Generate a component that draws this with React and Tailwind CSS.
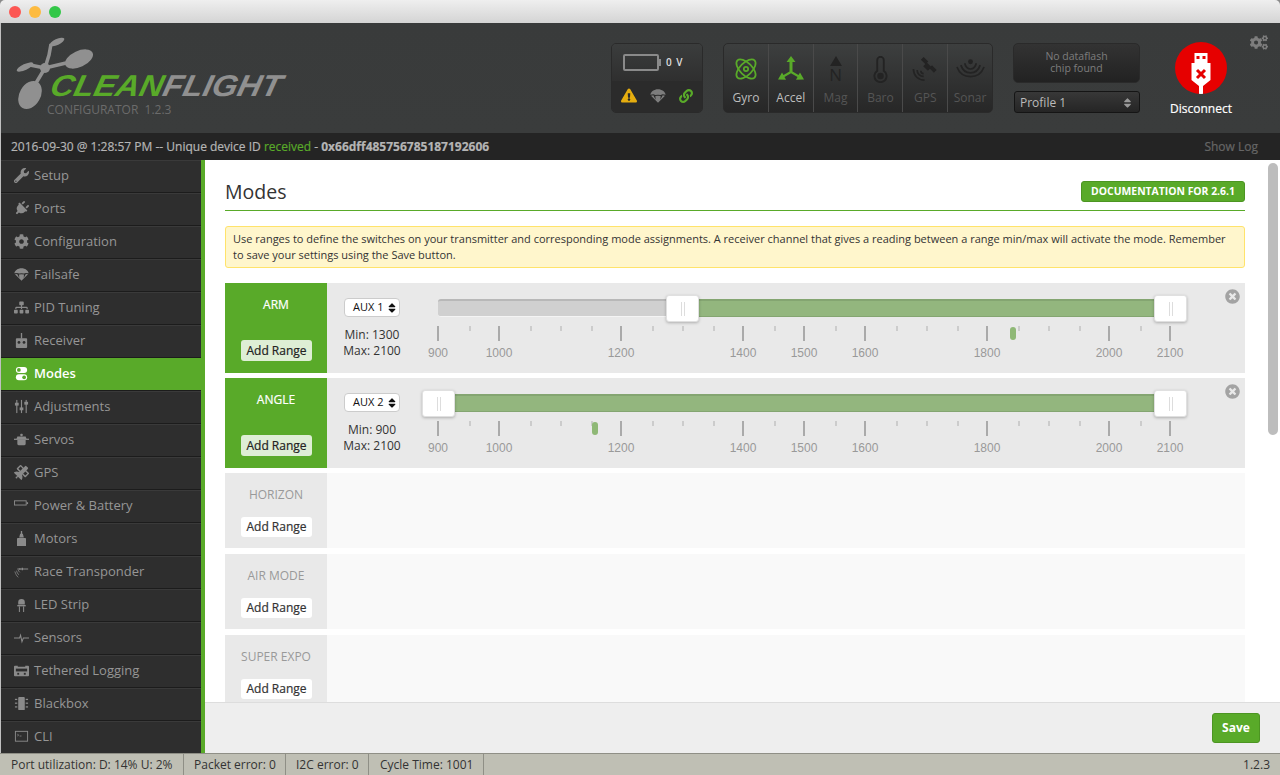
import {
  FaWrench,
  FaPlug,
  FaCog,
  FaCogs,
  FaSitemap,
  FaSatellite,
  FaExclamationTriangle,
  FaLink,
  FaTimesCircle,
  FaSortUp,
  FaSortDown,
} from 'react-icons/fa';

const xAt = (v) => ((v - 900) / 1200) * 732;

const Parachute = ({ className }) => (
  <svg viewBox="0 0 24 20" className={className} fill="currentColor">
    <path d="M12 0C6 0 1.500 3.500 0.500 8L5 7.500L8 8.500L12 8L16 8.500L19 7.500L23.500 8C22.500 3.500 18 0 12 0Z" />
    <path d="M1.500 9.500L10.500 18.500L12 20L13.500 18.500L22.500 9.500L19 9L15.500 15.500L16 10L12 9.500L8 10L8.500 15.500L5 9Z" />
  </svg>
);

const Plug = ({ className }) => <FaPlug className={`${className} rotate-45`} />;

const Radio = ({ className }) => (
  <svg viewBox="0 0 16 16" className={className} fill="currentColor">
    <rect x="7.300" y="0" width="1.400" height="6" />
    <path d="M2 6.500a1 1 0 011-1h10a1 1 0 011 1V15a1 1 0 01-1 1H3a1 1 0 01-1-1Z" />
    <circle cx="5.300" cy="10" r="1.500" fill="#2e2e2e" />
    <circle cx="10.700" cy="10" r="1.500" fill="#2e2e2e" />
  </svg>
);

const Toggles = ({ className }) => (
  <svg viewBox="0 0 16 16" className={className}>
    <rect x="2" y="1" width="12" height="6.500" rx="3.200" fill="#fff" />
    <circle cx="5.200" cy="4.200" r="2" fill="#59aa29" />
    <rect x="2" y="8.800" width="12" height="6.500" rx="3.200" fill="#fff" />
    <circle cx="10.800" cy="12" r="2" fill="#59aa29" />
  </svg>
);

const SlidersV = ({ className }) => (
  <svg viewBox="0 0 16 16" className={className} fill="currentColor">
    <rect x="2.400" y="1" width="1.200" height="14" />
    <rect x="7.400" y="1" width="1.200" height="14" />
    <rect x="12.400" y="1" width="1.200" height="14" />
    <rect x="1" y="4" width="4" height="3" />
    <rect x="6" y="9" width="4" height="3" />
    <rect x="11" y="3" width="4" height="3" />
  </svg>
);

const Pot = ({ className }) => (
  <svg viewBox="0 0 18 16" className={className} fill="currentColor">
    <rect x="7.500" y="1" width="3" height="3" rx="1" />
    <path d="M4 4.500h10l1 3H3Z" />
    <rect x="0" y="7" width="18" height="1.500" />
    <path d="M4 8.500h10V13a2 2 0 01-2 2H6a2 2 0 01-2-2Z" />
  </svg>
);

const Battery = ({ className }) => (
  <svg viewBox="0 0 16 16" className={className} fill="none" stroke="currentColor">
    <rect x="0.500" y="3" width="12.500" height="4.500" />
    <rect x="13.500" y="4.500" width="1.500" height="2" fill="currentColor" stroke="none" />
  </svg>
);

const Motor = ({ className }) => (
  <svg viewBox="0 0 16 16" className={className} fill="currentColor">
    <rect x="7.300" y="0" width="1.400" height="4" />
    <path d="M6.500 3h3l1 4h-5Z" />
    <path d="M4 7.500h8a.8.8 0 01.8.8V16H3.200V8.300A.8.800 0 014 7.500Z" />
  </svg>
);

const Transponder = ({ className }) => (
  <svg viewBox="0 0 18 16" className={className} fill="none" stroke="currentColor">
    <path d="M4 5h13" strokeWidth="1.200" />
    <path d="M10 3.500v3M7 4v2" strokeWidth="1.600" />
    <path d="M1 8c1 3 2 5 4 7M3 7c.5 2 1.500 4 3 5M5 6c.3 1 .8 2 2 3" strokeWidth="0.900" />
  </svg>
);

const Led = ({ className }) => (
  <svg viewBox="0 0 16 16" className={className} fill="currentColor">
    <path d="M4.500 5.500a3.500 3.500 0 017 0V8h-7Z" />
    <rect x="3.500" y="8.500" width="9" height="1.500" />
    <rect x="5.200" y="10" width="1.100" height="6" />
    <rect x="9.700" y="10" width="1.100" height="6" />
  </svg>
);

const Pulse = ({ className }) => (
  <svg viewBox="0 0 16 16" className={className} fill="none" stroke="currentColor" strokeWidth="1.100">
    <path d="M0 8.500h6l1-3 1.500 7L10 8.500h6" />
  </svg>
);

const Tape = ({ className }) => (
  <svg viewBox="0 0 16 16" className={className} fill="currentColor">
    <path d="M1 3h3v1h8V3h3a1 1 0 011 1v9a1 1 0 01-1 1H1a1 1 0 01-1-1V4a1 1 0 011-1Z" />
    <rect x="2" y="6" width="12" height="3" fill="#2e2e2e" />
    <rect x="3.500" y="10.500" width="2" height="2" fill="#2e2e2e" />
    <rect x="10.500" y="10.500" width="2" height="2" fill="#2e2e2e" />
  </svg>
);

const Chip = ({ className }) => (
  <svg viewBox="0 0 16 16" className={className} fill="currentColor">
    <rect x="4.500" y="1" width="7" height="14" rx="1" />
    <rect x="1" y="3" width="2.500" height="1.300" />
    <rect x="1" y="7" width="2.500" height="1.300" />
    <rect x="1" y="11" width="2.500" height="1.300" />
    <rect x="12.500" y="3" width="2.500" height="1.300" />
    <rect x="12.500" y="7" width="2.500" height="1.300" />
    <rect x="12.500" y="11" width="2.500" height="1.300" />
  </svg>
);

const Terminal = ({ className }) => (
  <svg viewBox="0 0 16 16" className={className} fill="none" stroke="currentColor">
    <rect x="1.500" y="2.500" width="13" height="10.500" />
    <path d="M3.500 5.500l1.500 1-1.500 1M6 7.500h2" strokeWidth="0.800" />
  </svg>
);

const tabs = [
  ['Setup', FaWrench],
  ['Ports', Plug],
  ['Configuration', FaCog],
  ['Failsafe', Parachute],
  ['PID Tuning', FaSitemap],
  ['Receiver', Radio],
  ['Modes', Toggles],
  ['Adjustments', SlidersV],
  ['Servos', Pot],
  ['GPS', FaSatellite],
  ['Power & Battery', Battery],
  ['Motors', Motor],
  ['Race Transponder', Transponder],
  ['LED Strip', Led],
  ['Sensors', Pulse],
  ['Tethered Logging', Tape],
  ['Blackbox', Chip],
  ['CLI', Terminal],
];

const Sidebar = () => (
  <div className="w-[204px] shrink-0 bg-[#2e2e2e] border-r-4 border-[#59aa29] overflow-hidden">
    {tabs.map(([name, Icon]) => (
      <div
        key={name}
        className={`h-[33px] flex items-center pb-[2px] text-[13px] border-b border-b-[#1c1c1c] border-t border-t-[#3a3a3a] ${
          name === 'Modes' ? 'bg-[#59aa29] text-white font-semibold border-t-[#59aa29]' : 'text-[#969696]'
        }`}
      >
        <span className={`w-[33px] pl-[13px] shrink-0 ${name === 'Modes' ? 'text-white' : 'text-[#8a8a8a]'}`}>
          <Icon className="w-[15px] h-[15px]" />
        </span>
        {name}
      </div>
    ))}
  </div>
);

const Logo = () => (
  <div className="relative w-[275px] h-[90px] ml-[15px] mt-[12px] shrink-0">
    <svg viewBox="0 0 95 80" className="absolute left-0 top-0 w-[95px] h-[80px] text-[#909090]" fill="currentColor">
      <ellipse cx="63" cy="24" rx="15" ry="8" transform="rotate(-25 63 24)" />
      <ellipse cx="14" cy="60" rx="10.500" ry="15" transform="rotate(30 14 60)" />
      <ellipse cx="41" cy="7" rx="8" ry="3" transform="rotate(-25 41 7)" />
      <ellipse cx="9" cy="32" rx="9" ry="3" transform="rotate(-25 9 32)" />
      <circle cx="29" cy="33" r="5" />
      <path d="M35 9L33 20L29 33M29 33L50 28M29 33L14 30M29 33L20 48" fill="none" stroke="currentColor" strokeWidth="3.500" />
    </svg>
    <div className="absolute left-[35px] top-[32px] w-[240px] font-['Liberation_Sans',sans-serif] font-bold italic text-[30px] leading-[38px] -skew-x-12 scale-x-[1.09] origin-left whitespace-nowrap">
      <span className="text-[#59aa29]">CLEAN</span>
      <span className="text-[#909090]">FLIGHT</span>
    </div>
    <div className="absolute left-[31px] top-[65px] text-[12px] leading-[20px] text-[#6b6b6b] whitespace-nowrap">
      CONFIGURATOR&nbsp;&nbsp;1.2.3
    </div>
  </div>
);

const GyroIcon = () => (
  <svg viewBox="-3 -3 30 30" className="w-[26px] h-[26px] text-[#59aa29]" fill="none" stroke="currentColor" strokeWidth="2">
    <ellipse cx="12" cy="12" rx="14" ry="7" transform="rotate(45 12 12)" />
    <ellipse cx="12" cy="12" rx="14" ry="7" transform="rotate(-45 12 12)" />
    <circle cx="12" cy="12" r="2.500" />
  </svg>
);

const AccelIcon = () => (
  <svg viewBox="0 0 28 26" className="w-[28px] h-[26px] text-[#59aa29]" fill="currentColor">
    <path d="M14 0l4.500 6h-3v9.500l6 3.500 1.500-2.500 4 7-8 .3 1.500-2.700-6.500-3.800-6.500 3.800 1.500 2.700-8-.3 4-7 1.500 2.500 6-3.500V6h-3Z" />
  </svg>
);

const MagIcon = () => (
  <div className="flex flex-col items-center text-[#232323]">
    <svg viewBox="0 0 12 10" className="w-[12px] h-[10px]" fill="currentColor">
      <path d="M6 0L12 10H0Z" />
    </svg>
    <span className="text-[17px] leading-[16px] mt-[1px]">N</span>
  </div>
);

const BaroIcon = () => (
  <svg viewBox="0 0 16 28" className="w-[15px] h-[27px] text-[#232323]" fill="none" stroke="currentColor" strokeWidth="2">
    <path d="M4.500 15.500V4a3.500 3.500 0 017 0V15.500a6.500 6.500 0 11-7 0Z" />
    <circle cx="8" cy="21" r="3.500" fill="currentColor" stroke="none" />
  </svg>
);

const GpsIcon = () => (
  <svg viewBox="0 0 28 28" className="w-[27px] h-[26px] text-[#232323]" fill="currentColor">
    <path d="M12 1l5 5-3 3-5-5ZM21 10l5 5-3 3-5-5Z" />
    <path d="M15.500 7l5 5-4 4-5-5Z" />
    <path d="M1 14c0 7 5 12 12 12M5 15c0 4 3 7 7 7M9 16c0 2 1 3 3 3" fill="none" stroke="currentColor" strokeWidth="1.800" />
  </svg>
);

const SonarIcon = () => (
  <svg viewBox="0 0 30 22" className="w-[29px] h-[22px] text-[#232323]" fill="none" stroke="currentColor" strokeWidth="1.800">
    <path d="M1 9c3 8 9 10 14 10s11-2 14-10" />
    <path d="M5 7c2 6 6 8 10 8s8-2 10-8" />
    <path d="M9 5c1 4 3 6 6 6s5-2 6-6" />
    <circle cx="15" cy="3.500" r="2.500" fill="currentColor" stroke="none" />
  </svg>
);

const sensors = [
  ['Gyro', GyroIcon, true],
  ['Accel', AccelIcon, true],
  ['Mag', MagIcon, false],
  ['Baro', BaroIcon, false],
  ['GPS', GpsIcon, false],
  ['Sonar', SonarIcon, false],
];

const SensorStatus = () => (
  <div className="flex w-[270px] h-[70px] ml-[20px] mt-[20px] shrink-0 rounded-[5px] border border-[#2a2a2a] bg-gradient-to-b from-[#3d3f3f] to-[#272727] overflow-hidden">
    {sensors.map(([name, Icon, on], i) => (
      <div
        key={name}
        className={`flex-1 flex flex-col items-center ${i > 0 ? 'border-l border-l-[#4a4a4a]' : ''}`}
      >
        <div className="h-[46px] flex items-center justify-center pt-[4px]">
          <Icon />
        </div>
        <span className={`text-[12px] leading-[16px] ${on ? 'text-[#bdbdbd]' : 'text-[#555]'}`}>{name}</span>
      </div>
    ))}
  </div>
);

const BatteryBox = () => (
  <div className="w-[92px] h-[70px] ml-[320px] mt-[20px] shrink-0 rounded-[5px] border border-[#2a2a2a] overflow-hidden flex flex-col">
    <div className="h-[37px] bg-gradient-to-b from-[#3b3d3d] to-[#2f2f2f] flex items-center pl-[11px]">
      <div className="w-[36px] h-[17px] border-2 border-[#8a8a8a] rounded-[2px]" />
      <div className="w-[2px] h-[7px] bg-[#8a8a8a]" />
      <span className="ml-[5px] text-[10px] font-semibold tracking-[1px] text-[#ddd]">0 V</span>
    </div>
    <div className="flex-1 bg-[#2b2b2b] flex items-center justify-between px-[9px] pb-[2px]">
      <FaExclamationTriangle className="w-[16px] h-[15px] text-[#e5ad0f]" />
      <Parachute className="w-[16px] h-[14px] text-[#7d7d7d]" />
      <FaLink className="w-[14px] h-[14px] text-[#59aa29]" />
    </div>
  </div>
);

const FlashAndProfile = () => (
  <div className="w-[127px] ml-[20px] mt-[20px] shrink-0">
    <div className="h-[40px] rounded-[5px] border border-[#2a2a2a] bg-gradient-to-b from-[#333] to-[#222] text-[10.5px] leading-[12px] text-[#7d7d7d] flex items-center justify-center text-center pb-[2px]">
      No dataflash
      <br />
      chip found
    </div>
    <div className="h-[22px] mt-[8px] ml-[1px] rounded-[3px] border border-[#151515] bg-gradient-to-b from-[#383838] to-[#252525] text-[12px] leading-[20px] text-[#bbb] flex items-center justify-between pl-[5px] pr-[8px] pt-[1px]">
      Profile 1
      <span className="relative w-[8px] h-[12px] text-[#999]">
        <FaSortUp className="absolute left-0 top-0 w-[9px] h-[12px]" />
        <FaSortDown className="absolute left-0 top-0 w-[9px] h-[12px]" />
      </span>
    </div>
  </div>
);

const Disconnect = () => (
  <div className="w-[80px] ml-[21px] mt-[19px] shrink-0 flex flex-col items-center">
    <div className="w-[52px] h-[52px] rounded-full bg-[#e60000] overflow-hidden">
      <svg viewBox="0 0 52 52" className="w-[52px] h-[52px]">
        <rect x="19.500" y="11" width="13" height="10" fill="#fff" />
        <rect x="21.500" y="14" width="3" height="3" fill="#e60000" />
        <rect x="27.500" y="14" width="3" height="3" fill="#e60000" />
        <path d="M16.500 21h19v17l-7.500 6v8h-4v-8l-7.500-6Z" fill="#fff" />
        <path d="M22 28l8 8M30 28l-8 8" stroke="#e60000" strokeWidth="3" />
      </svg>
    </div>
    <span className="mt-[6px] text-[12px] leading-[18px] font-medium [-webkit-text-stroke:0.2px] text-white whitespace-nowrap">Disconnect</span>
  </div>
);

const Header = () => (
  <div className="relative h-[110px] flex bg-gradient-to-b from-[#393b3b] to-[#3a3c3c]">
    <Logo />
    <BatteryBox />
    <SensorStatus />
    <FlashAndProfile />
    <Disconnect />
    <FaCogs className="absolute right-[12px] top-[12px] w-[18px] h-[15px] text-[#7d7d7d]" />
  </div>
);

const LogBar = () => (
  <div className="h-[27px] bg-[#242424] flex items-center justify-between pl-[10px] pr-[22px] text-[12px] font-medium [-webkit-text-stroke:0.2px] text-[#b5b5b5]">
    <div>
      2016-09-30 @ 1:28:57 PM -- Unique device ID <span className="text-[#59aa29] font-normal">received</span> -{' '}
      <span className="font-bold">0x66dff485756785187192606</span>
    </div>
    <span className="text-[#666]">Show Log</span>
  </div>
);

const majors = [900, 1000, 1200, 1400, 1500, 1600, 1800, 2000, 2100];
const minors = [950, 1050, 1100, 1150, 1250, 1300, 1350, 1450, 1550, 1650, 1700, 1750, 1850, 1900, 1950, 2050];

const Slider = ({ min, max, marker }) => (
  <div className="relative w-[732px] h-[70px] ml-[21px] mt-[16px] shrink-0">
    <div className="absolute left-0 right-0 top-0 h-[18px] bg-[#d0d0d0] border-t-2 border-b border-t-[#b8b8b8] border-b-[#f4f4f4] rounded-[3px]" />
    <div
      className="absolute top-0 h-[18px] bg-[#93b67e] border-t-2 border-b border-t-[#84a571] border-b-[#84a571]"
      style={{ left: xAt(min), width: xAt(max) - xAt(min) }}
    />
    {[min, max].map((v) => (
      <div
        key={v}
        className="absolute top-[-4px] w-[33px] h-[27px] -ml-[16px] bg-white rounded-[3px] border border-[#e0e0e0] shadow-[0_1px_3px_rgba(0,0,0,0.25)] flex justify-center items-center gap-[2px]"
        style={{ left: xAt(v) }}
      >
        <i className="w-px h-[14px] bg-[#ddd]" />
        <i className="w-px h-[14px] bg-[#ddd]" />
      </div>
    ))}
    {minors.map((v) => (
      <i key={v} className="absolute top-[27px] w-[2px] h-[5px] bg-[#ccc]" style={{ left: xAt(v) }} />
    ))}
    {majors.map((v) => (
      <i key={v} className="absolute top-[27px] w-[2px] h-[15px] bg-[#aaa] -ml-px" style={{ left: xAt(v) }} />
    ))}
    {majors.map((v) => (
      <span
        key={v}
        className="absolute top-[47px] -translate-x-1/2 font-['Liberation_Sans',sans-serif] text-[12px] leading-[14px] text-[#999]"
        style={{ left: xAt(v) }}
      >
        {v}
      </span>
    ))}
    <i className="absolute top-[28px] w-[6px] h-[13px] -ml-[3px] rounded-[3px] bg-[#8fb876]" style={{ left: xAt(marker) }} />
  </div>
);

const ChannelColumn = ({ aux, min, max }) => (
  <div className="w-[90px] shrink-0 flex flex-col items-center pt-[15px]">
    <div className="w-[56px] h-[19px] rounded-[4px] border border-[#ccc] bg-white flex items-center justify-between pl-[8px] pr-[3px] text-[11px] text-[#111]">
      {aux}
      <span className="relative w-[8px] h-[12px]">
        <FaSortUp className="absolute left-0 top-0 w-[8px] h-[12px]" />
        <FaSortDown className="absolute left-0 top-0 w-[8px] h-[12px]" />
      </span>
    </div>
    <div className="mt-[10px] text-[12px] leading-[16px] text-center text-[#333]">
      Min: {min}
      <br />
      Max: {max}
    </div>
  </div>
);

const ActiveMode = ({ name, aux, min, max, marker }) => (
  <div className="relative h-[90px] mb-[5px] flex bg-[#e9e9e9]">
    <div className="w-[102px] shrink-0 bg-[#59aa29] flex flex-col items-center justify-between pt-[13px] pb-[12px]">
      <span className="text-[12px] leading-[18px] font-medium [-webkit-text-stroke:0.2px] text-white">{name}</span>
      <button className="w-[71px] h-[21px] ml-[1px] rounded-[3px] bg-[#deeed5] text-[12px] font-medium [-webkit-text-stroke:0.2px] text-[#222]">Add Range</button>
    </div>
    <ChannelColumn aux={aux} min={min} max={max} />
    <Slider min={min} max={max} marker={marker} />
    <FaTimesCircle className="absolute right-[5px] top-[6px] w-[15px] h-[15px] text-[#a3a3a3]" />
  </div>
);

const IdleMode = ({ name }) => (
  <div className="h-[75px] mb-[6px] flex bg-[#f9f9f9]">
    <div className="w-[102px] shrink-0 bg-[#e9e9e9] flex flex-col items-center justify-between pt-[13px] pb-[11px]">
      <span className="text-[12px] leading-[18px] font-medium text-[#999]">{name}</span>
      <button className="w-[71px] h-[20px] ml-[1px] rounded-[3px] bg-white text-[12px] font-medium [-webkit-text-stroke:0.2px] text-[#333]">Add Range</button>
    </div>
  </div>
);

const ModesTab = () => (
  <div className="relative flex-1 flex flex-col min-w-0">
    <div className="flex-1 min-h-0 overflow-hidden bg-white pl-[20px] pr-[35px]">
      <div className="h-[51px] flex items-end justify-between border-b border-[#59aa29] pb-[7px]">
        <h1 className="text-[19.5px] leading-[27px] -mb-[2px] text-[#333]">Modes</h1>
        <div className="h-[21px] w-[164px] mb-[1px] rounded-[3px] bg-[#59aa29] border border-[#4c9522] text-[10.4px] font-bold text-white flex items-center justify-center">
          DOCUMENTATION FOR 2.6.1
        </div>
      </div>
      <div className="mt-[15px] mb-[15px] h-[42px] rounded-[3px] border border-[#ffe36b] bg-[#fff6cc] pl-[7px] pr-[14px] pt-[4px] text-[11px] leading-[16px] text-[#333]">
        Use ranges to define the switches on your transmitter and corresponding mode assignments. A receiver channel that gives a reading between a range min/max will activate the mode. Remember to save your settings using the Save button.
      </div>
      <ActiveMode name="ARM" aux="AUX 1" min={1300} max={2100} marker={1842} />
      <ActiveMode name="ANGLE" aux="AUX 2" min={900} max={2100} marker={1157} />
      <IdleMode name="HORIZON" />
      <IdleMode name="AIR MODE" />
      <IdleMode name="SUPER EXPO" />
    </div>
    <div className="h-[51px] shrink-0 bg-[#eeeeee] border-t border-[#dddddd] flex items-center justify-end pr-[20px]">
      <button className="w-[48px] h-[30px] rounded-[3px] bg-[#59aa29] border border-[#4c9522] text-[12px] font-bold text-white">Save</button>
    </div>
    <div className="absolute right-[2px] top-[3px] w-[10px] h-[272px] rounded-full bg-[#bdbdbd]" />
  </div>
);

const StatusBar = () => (
  <div className="h-[22px] bg-[#bfbfb4] flex items-center text-[12px] text-[#333] border-t border-[#8f8f86]">
    <span className="w-[184px] pl-[11px] leading-[21px] border-r border-[#8f8f86]">Port utilization: D: 14% U: 2%</span>
    <span className="w-[102px] pl-[10px] leading-[21px] border-r border-[#8f8f86]">Packet error: 0</span>
    <span className="w-[83px] pl-[10px] leading-[21px] border-r border-[#8f8f86]">I2C error: 0</span>
    <span className="w-[115px] pl-[11px] leading-[21px] border-r border-[#8f8f86]">Cycle Time: 1001</span>
    <span className="ml-auto pr-[10px]">1.2.3</span>
  </div>
);

const TitleBar = () => (
  <div className="h-[23px] shrink-0 rounded-t-[5px] bg-gradient-to-b from-[#efefef] to-[#d4d4d4] flex items-center gap-[8px] pl-[9px]">
    <i className="w-[12px] h-[12px] rounded-full bg-[#fc5753]" />
    <i className="w-[12px] h-[12px] rounded-full bg-[#fdbb40]" />
    <i className="w-[12px] h-[12px] rounded-full bg-[#33c748]" />
  </div>
);

export default function App() {
  return (
    <div className="w-[1280px] h-[775px] overflow-hidden bg-[#8a8a8a] flex flex-col font-['Open_Sans',sans-serif]">
      <TitleBar />
      <div className="flex-1 min-h-0 flex flex-col pl-px bg-[#c0c0c0]">
        <Header />
        <LogBar />
        <div className="flex-1 min-h-0 flex">
          <Sidebar />
          <ModesTab />
        </div>
      </div>
      <StatusBar />
    </div>
  );
}
